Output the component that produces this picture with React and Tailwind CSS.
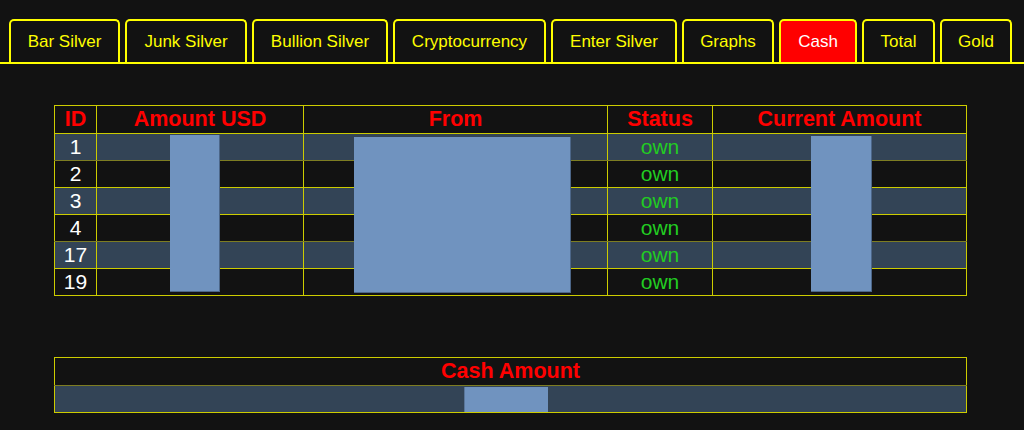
import React from "react";

const tabs = [
  { label: "Bar Silver", w: "w-[111px]" },
  { label: "Junk Silver", w: "w-[122px]" },
  { label: "Bullion Silver", w: "w-[136px]" },
  { label: "Cryptocurrency", w: "w-[153px]" },
  { label: "Enter Silver", w: "w-[126px]" },
  { label: "Graphs", w: "w-[92px]" },
  { label: "Cash", w: "w-[78px]", active: true },
  { label: "Total", w: "w-[73px]" },
  { label: "Gold", w: "w-[72px]" },
];

const rows = [
  { id: "1", striped: true, olive: true },
  { id: "2", striped: false },
  { id: "3", striped: true },
  { id: "4", striped: false, olive: true },
  { id: "17", striped: true },
  { id: "19", striped: false },
];

export default function App() {
  return (
    <div className="min-h-[430px] w-[1024px] bg-[#121212] font-['Liberation_Sans',Arial,sans-serif] overflow-hidden">
      {/* Tabs */}
      <nav className="flex items-end gap-[5px] pl-[9px] pt-[19px] border-b-2 border-[#ffff00]">
        {tabs.map((t) => (
          <div
            key={t.label}
            className={
              t.active
                ? `${t.w} h-[43px] flex items-center justify-center rounded-t-[5px] border-2 border-b-0 border-[#ffff00] bg-[#ff0000] text-white text-[17px]`
                : `${t.w} h-[43px] flex items-center justify-center rounded-t-[5px] border-2 border-b-0 border-[#ffff00] bg-[#121212] text-[#ffff00] text-[17px]`
            }
          >
            {t.label}
          </div>
        ))}
      </nav>

      {/* Main table */}
      <div className="relative ml-[54px] mt-[41px] w-[912px]">
        <table className="w-[912px] table-fixed border-collapse border border-[#cccc00] text-[21px]">
          <colgroup>
            <col className="w-[42px]" />
            <col className="w-[207px]" />
            <col className="w-[304px]" />
            <col className="w-[105px]" />
            <col className="w-[254px]" />
          </colgroup>
          <thead>
            <tr className="h-[28px]">
              <th className="border border-[#cccc00] p-0 font-bold text-[#ff0000] text-[21.5px] leading-none">ID</th>
              <th className="border border-[#cccc00] p-0 font-bold text-[#ff0000] text-[21.5px] leading-none">Amount USD</th>
              <th className="border border-[#cccc00] p-0 font-bold text-[#ff0000] text-[21.5px] leading-none">From</th>
              <th className="border border-[#cccc00] p-0 font-bold text-[#ff0000] text-[21.5px] leading-none">Status</th>
              <th className="border border-[#cccc00] p-0 font-bold text-[#ff0000] text-[21.5px] leading-none">Current Amount</th>
            </tr>
          </thead>
          <tbody>
            {rows.map((r) => {
              const bg = r.striped ? "bg-[#334456]" : "bg-[#121212]";
              const bb = r.olive ? "border-b-[#7d7d22]" : "border-b-[#cccc00]";
              const cell = `border border-[#cccc00] ${bb} p-0 pb-[2px] leading-none text-center`;
              return (
                <tr key={r.id} className={`h-[27px] ${bg}`}>
                  <td className={`${cell} text-white`}>{r.id}</td>
                  <td className={cell}></td>
                  <td className={cell}></td>
                  <td className={`${cell} text-[#22cc22]`}>own</td>
                  <td className={cell}></td>
                </tr>
              );
            })}
          </tbody>
        </table>
        {/* redaction overlays */}
        <div className="absolute left-[116px] top-[30px] w-[50px] h-[157px] bg-[#7093bf] border-r border-b border-[#4c6688]" />
        <div className="absolute left-[300px] top-[32px] w-[217px] h-[156px] bg-[#7093bf] border-r border-b border-[#4c6688]" />
        <div className="absolute left-[757px] top-[31px] w-[61px] h-[156px] bg-[#7093bf] border-r border-b border-[#4c6688]" />
      </div>

      {/* Cash Amount table */}
      <div className="relative ml-[54px] mt-[61px] w-[913px]">
        <table className="w-[913px] border-collapse border border-[#cccc00] text-[21px]">
          <thead>
            <tr className="h-[28px]">
              <th className="border border-[#cccc00] border-b-[#7d7d22] p-0 font-bold text-[#ff0000] text-[21.5px] leading-none">Cash Amount</th>
            </tr>
          </thead>
          <tbody>
            <tr className="h-[27px] bg-[#334456]">
              <td className="border border-[#cccc00] p-0"></td>
            </tr>
          </tbody>
        </table>
        <div className="absolute left-[410px] top-[30px] w-[84px] h-[25px] bg-[#7093bf] border-l border-[#5a7699]" />
      </div>
    </div>
  );
}
